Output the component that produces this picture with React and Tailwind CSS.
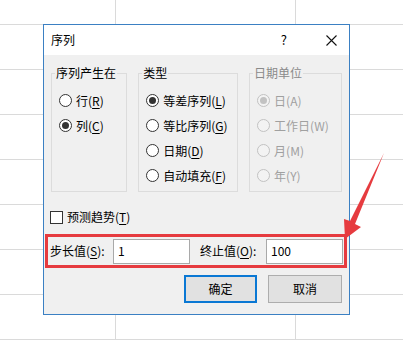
import React from "react";

const font = "font-['Noto_Sans_CJK_SC','Noto_Sans',sans-serif]";

const Radio = ({ checked, disabled }) => (
  <span
    className={
      disabled
        ? "w-[13px] h-[13px] shrink-0 rounded-full border border-[#c2c2c2] bg-[#f3f3f3] flex items-center justify-center"
        : "w-[13px] h-[13px] shrink-0 rounded-full border border-[#333333] bg-white flex items-center justify-center"
    }
  >
    {checked && (
      <span
        className={
          disabled
            ? "w-[7px] h-[7px] rounded-full bg-[#c2c2c2]"
            : "w-[7px] h-[7px] rounded-full bg-[#333333]"
        }
      />
    )}
  </span>
);

const Option = ({ text, k, checked, disabled }) => (
  <div className="h-[25px] flex items-center gap-[4px]">
    <Radio checked={checked} disabled={disabled} />
    {disabled ? (
      <span className="text-[#a0a0a0]">
        {text}({k})
      </span>
    ) : (
      <span>
        {text}(<span className="underline underline-offset-2">{k}</span>)
      </span>
    )}
  </div>
);

const Group = ({ title, width, disabled, children }) => (
  <fieldset className={`${width} border border-[#dcdcdc] pl-[7px] pt-[7px] pb-[3px]`}>
    <legend
      className={
        disabled
          ? "-ml-[4px] px-[1px] leading-[16px] text-[#8a8a8a]"
          : "-ml-[4px] px-[1px] leading-[16px]"
      }
    >
      {title}
    </legend>
    {children}
  </fieldset>
);

const Row = ({ h }) => (
  <div className={`${h} flex border-b border-[#dadada]`}>
    <div className="w-[116px] border-r border-[#dadada]" />
    <div className="w-[180px] border-r border-[#dadada]" />
    <div className="flex-1" />
  </div>
);

export default function App() {
  return (
    <div className={`relative w-[403px] h-[344px] overflow-hidden bg-white text-[12px] text-black ${font}`}>
      {/* sheet grid */}
      <div className="flex flex-col">
        <Row h="h-[25px]" />
        <Row h="h-[45px]" />
        <Row h="h-[45px]" />
        <Row h="h-[45px]" />
        <Row h="h-[45px]" />
        <Row h="h-[45px]" />
        <Row h="h-[45px]" />
        <Row h="h-[45px]" />
      </div>

      {/* dialog */}
      <div className="absolute left-[43px] top-[24px] w-[307px] h-[291px] border border-[#3b80c3] bg-[#f0f0f0] flex flex-col">
        <div className="h-[30px] bg-white flex items-center pl-[7px] pr-[12px]">
          <span className="leading-[16px]">序列</span>
          <span className="ml-auto mr-[39px] text-[13px] leading-[16px]">?</span>
          <svg width="11" height="11" viewBox="0 0 11 11">
            <path d="M0.5 0.5 L10.5 10.5 M10.5 0.5 L0.5 10.5" stroke="#111" strokeWidth="1.1" />
          </svg>
        </div>

        <div className="flex flex-col px-[7px] pt-[10px]">
          <div className="flex items-stretch gap-[11px]">
            <Group title="序列产生在" width="w-[77px]">
              <Option text="行" k="R" />
              <Option text="列" k="C" checked />
            </Group>
            <Group title="类型" width="w-[101px]">
              <Option text="等差序列" k="L" checked />
              <Option text="等比序列" k="G" />
              <Option text="日期" k="D" />
              <Option text="自动填充" k="F" />
            </Group>
            <Group title="日期单位" width="w-[94px]" disabled>
              <Option text="日" k="A" checked disabled />
              <Option text="工作日" k="W" disabled />
              <Option text="月" k="M" disabled />
              <Option text="年" k="Y" disabled />
            </Group>
          </div>

          <div className="mt-[15px] h-[20px] flex items-center gap-[4px] -ml-[1px]">
            <span className="w-[13px] h-[13px] border border-[#333333] bg-white" />
            <span className="leading-[16px]">
              预测趋势(<span className="underline underline-offset-2">T</span>)
            </span>
          </div>

          <div className="mt-[7px] -ml-[6px] -mr-[5px] h-[34px] border-[3px] border-[#e63b3f] flex items-center pl-[2px]">
            <span className="w-[63px] leading-[16px]">
              步长值(<span className="underline underline-offset-2">S</span>):
            </span>
            <div className="w-[77px] h-[25px] border border-[#a9a9a9] bg-white flex items-center pl-[4px] leading-[16px]">
              1
            </div>
            <span className="ml-[10px] w-[66px] leading-[16px]">
              终止值(<span className="underline underline-offset-2">O</span>):
            </span>
            <div className="w-[77px] h-[25px] border border-[#a9a9a9] bg-white flex items-center pl-[4px] leading-[16px]">
              100
            </div>
          </div>

          <div className="mt-[7px] flex justify-end gap-[11px]">
            <button className="w-[73px] h-[28px] border-2 border-[#0a78d4] bg-[#e1e1e1] leading-[16px]">
              确定
            </button>
            <button className="w-[74px] h-[28px] border border-[#adadad] bg-[#e1e1e1] leading-[16px]">
              取消
            </button>
          </div>
        </div>
      </div>

      {/* annotation arrow */}
      <svg className="absolute left-0 top-0" width="403" height="344" viewBox="0 0 403 344">
        <polygon
          points="384,153 355,224 361,227 345,239 344,219 350,221"
          fill="#e63b3f"
        />
      </svg>
    </div>
  );
}
